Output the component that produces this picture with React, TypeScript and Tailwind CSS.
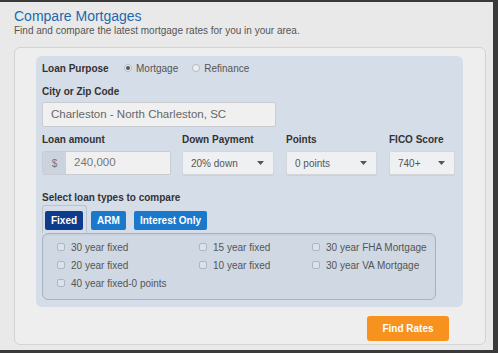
import React from 'react';

const font = { fontFamily: '"Liberation Sans", Arial, sans-serif' };

function Caret() {
  return (
    <svg width="7" height="4" viewBox="0 0 7 4" className="shrink-0">
      <path d="M0 0 L7 0 L3.5 4 Z" fill="#555" />
    </svg>
  );
}

function Select({ value, width }: { value: string; width: string }) {
  return (
    <div
      className={`${width} flex h-[24px] items-center justify-between rounded-[2px] border border-[#d3d7dc] bg-[#eef0f2] pl-[8px] pr-[9px] text-[10px] text-[#555] shadow-[0_1px_1px_rgba(0,0,0,0.06)]`}
    >
      <span>{value}</span>
      <Caret />
    </div>
  );
}

function Radio({ checked, label }: { checked?: boolean; label: string }) {
  return (
    <div className="flex items-center gap-[4px]">
      <span className="flex h-[8px] w-[8px] items-center justify-center rounded-full border border-[#b5b9bf] bg-[#eceef1]">
        {checked && <span className="h-[4px] w-[4px] rounded-full bg-[#555]" />}
      </span>
      <span className="text-[10px] text-[#555]">{label}</span>
    </div>
  );
}

function Check({ label }: { label: string }) {
  return (
    <div className="flex h-[18px] items-center gap-[6px]">
      <span className="h-[8px] w-[8px] rounded-[2px] border border-[#aeb6c1] bg-[#dde2e9]" />
      <span className="text-[10px] text-[#555]">{label}</span>
    </div>
  );
}

export default function App() {
  return (
    <div className="h-[353px] w-[498px] overflow-hidden bg-[#3a3a3a] pb-[3px] pr-[5px] pt-[2px]" style={font}>
      <div className="h-full w-full bg-[#e9e9e9] pl-[14px] pt-[6px]">
        <h1 className="text-[14px] leading-[16px] text-[#1b6aae]">Compare Mortgages</h1>
        <p className="mt-[1px] text-[10px] leading-[12px] text-[#555]">
          Find and compare the latest mortgage rates for you in your area.
        </p>

        <div className="mt-[10px] h-[298px] w-[472px] rounded-[6px] border border-[#d3d3d3] bg-[#eeeeee] pl-[21px] pt-[8px]">
          <div className="w-[427px] rounded-[6px] bg-[#d5dde8] pb-[7px] pl-[6px] pt-[6px]">
            <div className="flex h-[12px] items-center">
              <span className="w-[82px] text-[10px] font-bold text-[#333]">Loan Purpose</span>
              <Radio checked label="Mortgage" />
              <div className="ml-[14px]">
                <Radio label="Refinance" />
              </div>
            </div>

            <div className="mt-[12px] text-[10px] font-bold leading-[12px] text-[#333]">City or Zip Code</div>
            <div className="mt-[4px] flex h-[25px] w-[234px] items-center rounded-[2px] border border-[#c9cdd2] bg-[#f0f0f0] pl-[8px] text-[11.5px] text-[#666]">
              Charleston - North Charleston, SC
            </div>

            <div className="mt-[7px] flex">
              <div className="w-[140px]">
                <div className="text-[10px] font-bold leading-[12px] text-[#333]">Loan amount</div>
                <div className="mt-[5px] flex h-[24px] w-[129px] overflow-hidden rounded-[2px] border border-[#c9cdd2]">
                  <span className="flex w-[23px] items-center justify-center bg-[#cbd3de] text-[10px] text-[#777]">$</span>
                  <span className="flex flex-1 items-center bg-[#f0f0f0] pl-[8px] text-[11.5px] text-[#777]">240,000</span>
                </div>
              </div>
              <div className="w-[104px]">
                <div className="text-[10px] font-bold leading-[12px] text-[#333]">Down Payment</div>
                <div className="mt-[5px]">
                  <Select value="20% down" width="w-[92px]" />
                </div>
              </div>
              <div className="w-[103px]">
                <div className="text-[10px] font-bold leading-[12px] text-[#333]">Points</div>
                <div className="mt-[5px]">
                  <Select value="0 points" width="w-[91px]" />
                </div>
              </div>
              <div>
                <div className="text-[10px] font-bold leading-[12px] text-[#333]">FICO Score</div>
                <div className="mt-[5px]">
                  <Select value="740+" width="w-[66px]" />
                </div>
              </div>
            </div>

            <div className="mt-[17px] text-[10px] font-bold leading-[12px] text-[#333]">Select loan types to compare</div>

            <div className="mt-[1px] flex items-end">
              <div className="h-[28px] rounded-t-[3px] border border-b-0 border-[#b9c3d0] pl-[2px] pr-[3px] pt-[5px]">
                <div className="flex h-[19px] w-[38px] items-center justify-center rounded-[2px] bg-[#0c3c8b] text-[10px] font-bold text-white">
                  Fixed
                </div>
              </div>
              <div className="mb-[3px] ml-[4px] flex h-[19px] w-[35px] items-center justify-center rounded-[2px] bg-[#1b79cc] text-[10px] font-bold text-white">
                ARM
              </div>
              <div className="mb-[3px] ml-[8px] flex h-[19px] w-[73px] items-center justify-center rounded-[2px] bg-[#1b79cc] text-[10px] font-bold text-white">
                Interest Only
              </div>
            </div>

            <div className="grid h-[67px] w-[394px] grid-cols-[142px_113px_1fr] content-start rounded-[6px] border border-[#a9b3c1] bg-[#cfd8e3] pl-[14px] pt-[4px] shadow-[inset_0_1px_2px_rgba(0,0,0,0.06)]">
              <Check label="30 year fixed" />
              <Check label="15 year fixed" />
              <Check label="30 year FHA Mortgage" />
              <Check label="20 year fixed" />
              <Check label="10 year fixed" />
              <Check label="30 year VA Mortgage" />
              <Check label="40 year fixed-0 points" />
            </div>
          </div>

          <div className="mr-[36px] mt-[9px] flex justify-end">
            <div className="flex h-[25px] w-[82px] items-center justify-center rounded-[3px] bg-[#f7921e] text-[10px] font-bold text-white">
              Find Rates
            </div>
          </div>
        </div>
      </div>
    </div>
  );
}
